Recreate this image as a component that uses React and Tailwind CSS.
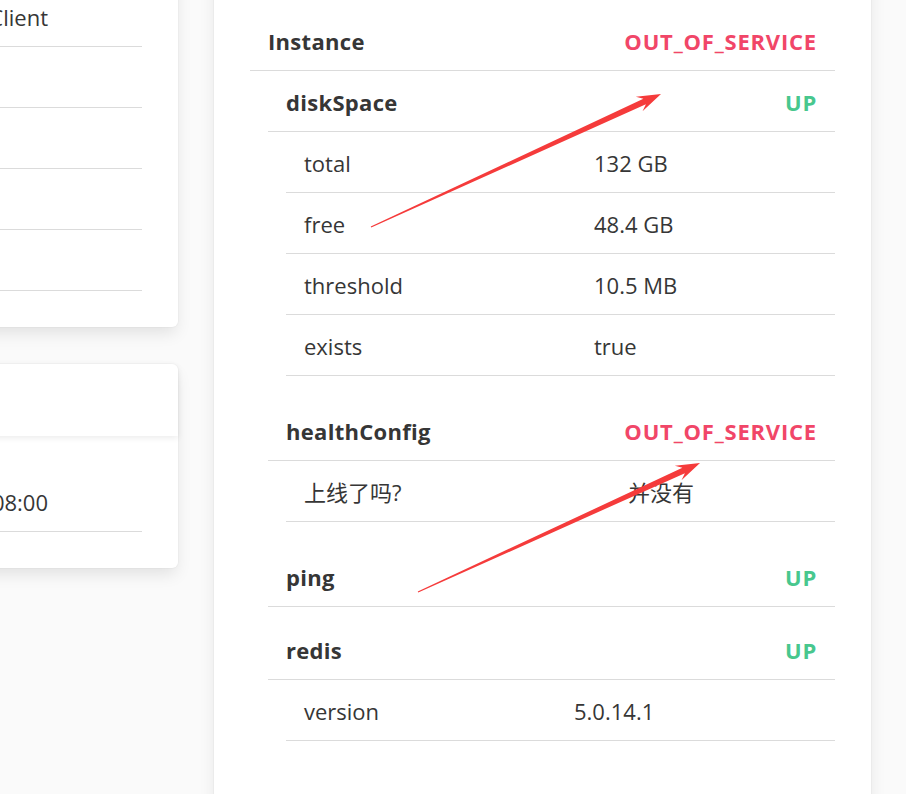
import React from 'react';

const font = { fontFamily: '"Open Sans", "Noto Sans CJK SC", sans-serif' };

const arrowPoints = (x1, y1, x2, y2) => {
  const dx = x2 - x1;
  const dy = y2 - y1;
  const len = Math.sqrt(dx * dx + dy * dy);
  const ux = dx / len;
  const uy = dy / len;
  const nx = -uy;
  const ny = ux;
  const wing = [x2 - ux * 24, y2 - uy * 24];
  const neck = [x2 - ux * 18, y2 - uy * 18];
  const pts = [
    [x1 + nx * 0.6, y1 + ny * 0.6],
    [neck[0] + nx * 3, neck[1] + ny * 3],
    [wing[0] + nx * 8, wing[1] + ny * 8],
    [x2, y2],
    [wing[0] - nx * 8, wing[1] - ny * 8],
    [neck[0] - nx * 3, neck[1] - ny * 3],
    [x1 - nx * 0.6, y1 - ny * 0.6],
  ];
  return pts.map((p) => p.join(',')).join(' ');
};

const HeadRow = ({ name, status }) => (
  <div className="flex h-[61px] items-center justify-between border-b border-[#dbdbdb] px-[18px] pt-[3px] font-bold">
    <span className="tracking-[0.3px]">{name}</span>
    <span className={status === 'UP' ? 'tracking-[0.8px] text-[#48c78e]' : 'tracking-[0.8px] text-[#f14668]'}>{status}</span>
  </div>
);

const DetailRow = ({ label, value, labelWidth }) => (
  <div className="flex h-[61px] items-center border-b border-[#dbdbdb] pt-[3px]">
    <span className="shrink-0 px-[18px]" style={{ width: labelWidth }}>{label}</span>
    <span className="px-[18px]">{value}</span>
  </div>
);

const LeftRow = ({ text }) => (
  <div className="flex h-[61px] items-center justify-end border-b border-[#dbdbdb] pr-[94px] pt-[3px]">
    <span className="whitespace-nowrap">{text}</span>
  </div>
);

export default function App() {
  return (
    <div className="relative h-[794px] w-full overflow-hidden bg-[#fafafa] text-[22px] text-[#363636]" style={font}>
      <div className="flex items-start gap-[36px]">
        <div className="-ml-[100px] w-[278px] shrink-0">
          <div className="-mt-[39px] rounded-b-[6px] bg-white pt-[25px] pb-[36px] pr-[36px] shadow-[0_8px_16px_-2px_rgba(10,10,10,0.1),0_0_0_1px_rgba(10,10,10,0.02)]">
            <LeftRow text="EurekaClient" />
            <LeftRow text="" />
            <LeftRow text="" />
            <LeftRow text="" />
            <LeftRow text="" />
          </div>
          <div className="mt-[37px] rounded-[6px] bg-white shadow-[0_8px_16px_-2px_rgba(10,10,10,0.1),0_0_0_1px_rgba(10,10,10,0.02)]">
            <div className="h-[72px] rounded-t-[6px] shadow-[0_2px_6px_rgba(10,10,10,0.08)]" />
            <div className="pt-[35px] pb-[36px] pr-[36px]">
              <LeftRow text="2023-01-01T00:00:00+08:00" />
            </div>
          </div>
        </div>

        <div className="-mt-[30px] h-[900px] w-[657px] shrink-0 bg-white px-[36px] pt-[40px] shadow-[0_8px_16px_-2px_rgba(10,10,10,0.1),0_0_0_1px_rgba(10,10,10,0.02)]">
          <HeadRow name="Instance" status="OUT_OF_SERVICE" />
          <div className="pl-[18px]">
            <HeadRow name="diskSpace" status="UP" />
            <div className="mb-[24px] pl-[18px]">
              <DetailRow label="total" value="132 GB" labelWidth={290} />
              <DetailRow label="free" value="48.4 GB" labelWidth={290} />
              <DetailRow label="threshold" value="10.5 MB" labelWidth={290} />
              <DetailRow label="exists" value="true" labelWidth={290} />
            </div>
            <HeadRow name="healthConfig" status="OUT_OF_SERVICE" />
            <div className="mb-[24px] pl-[18px]">
              <DetailRow label="上线了吗?" value="并没有" labelWidth={324} />
            </div>
            <div className="mb-[12px]">
              <HeadRow name="ping" status="UP" />
            </div>
            <HeadRow name="redis" status="UP" />
            <div className="pl-[18px]">
              <DetailRow label="version" value="5.0.14.1" labelWidth={270} />
            </div>
          </div>
        </div>
      </div>

      <svg className="pointer-events-none absolute left-0 top-0" width="906" height="794">
        <polygon points={arrowPoints(371, 227, 661, 94)} fill="#f53b3b" />
        <polygon points={arrowPoints(418, 592, 700, 463)} fill="#f53b3b" />
      </svg>
    </div>
  );
}
